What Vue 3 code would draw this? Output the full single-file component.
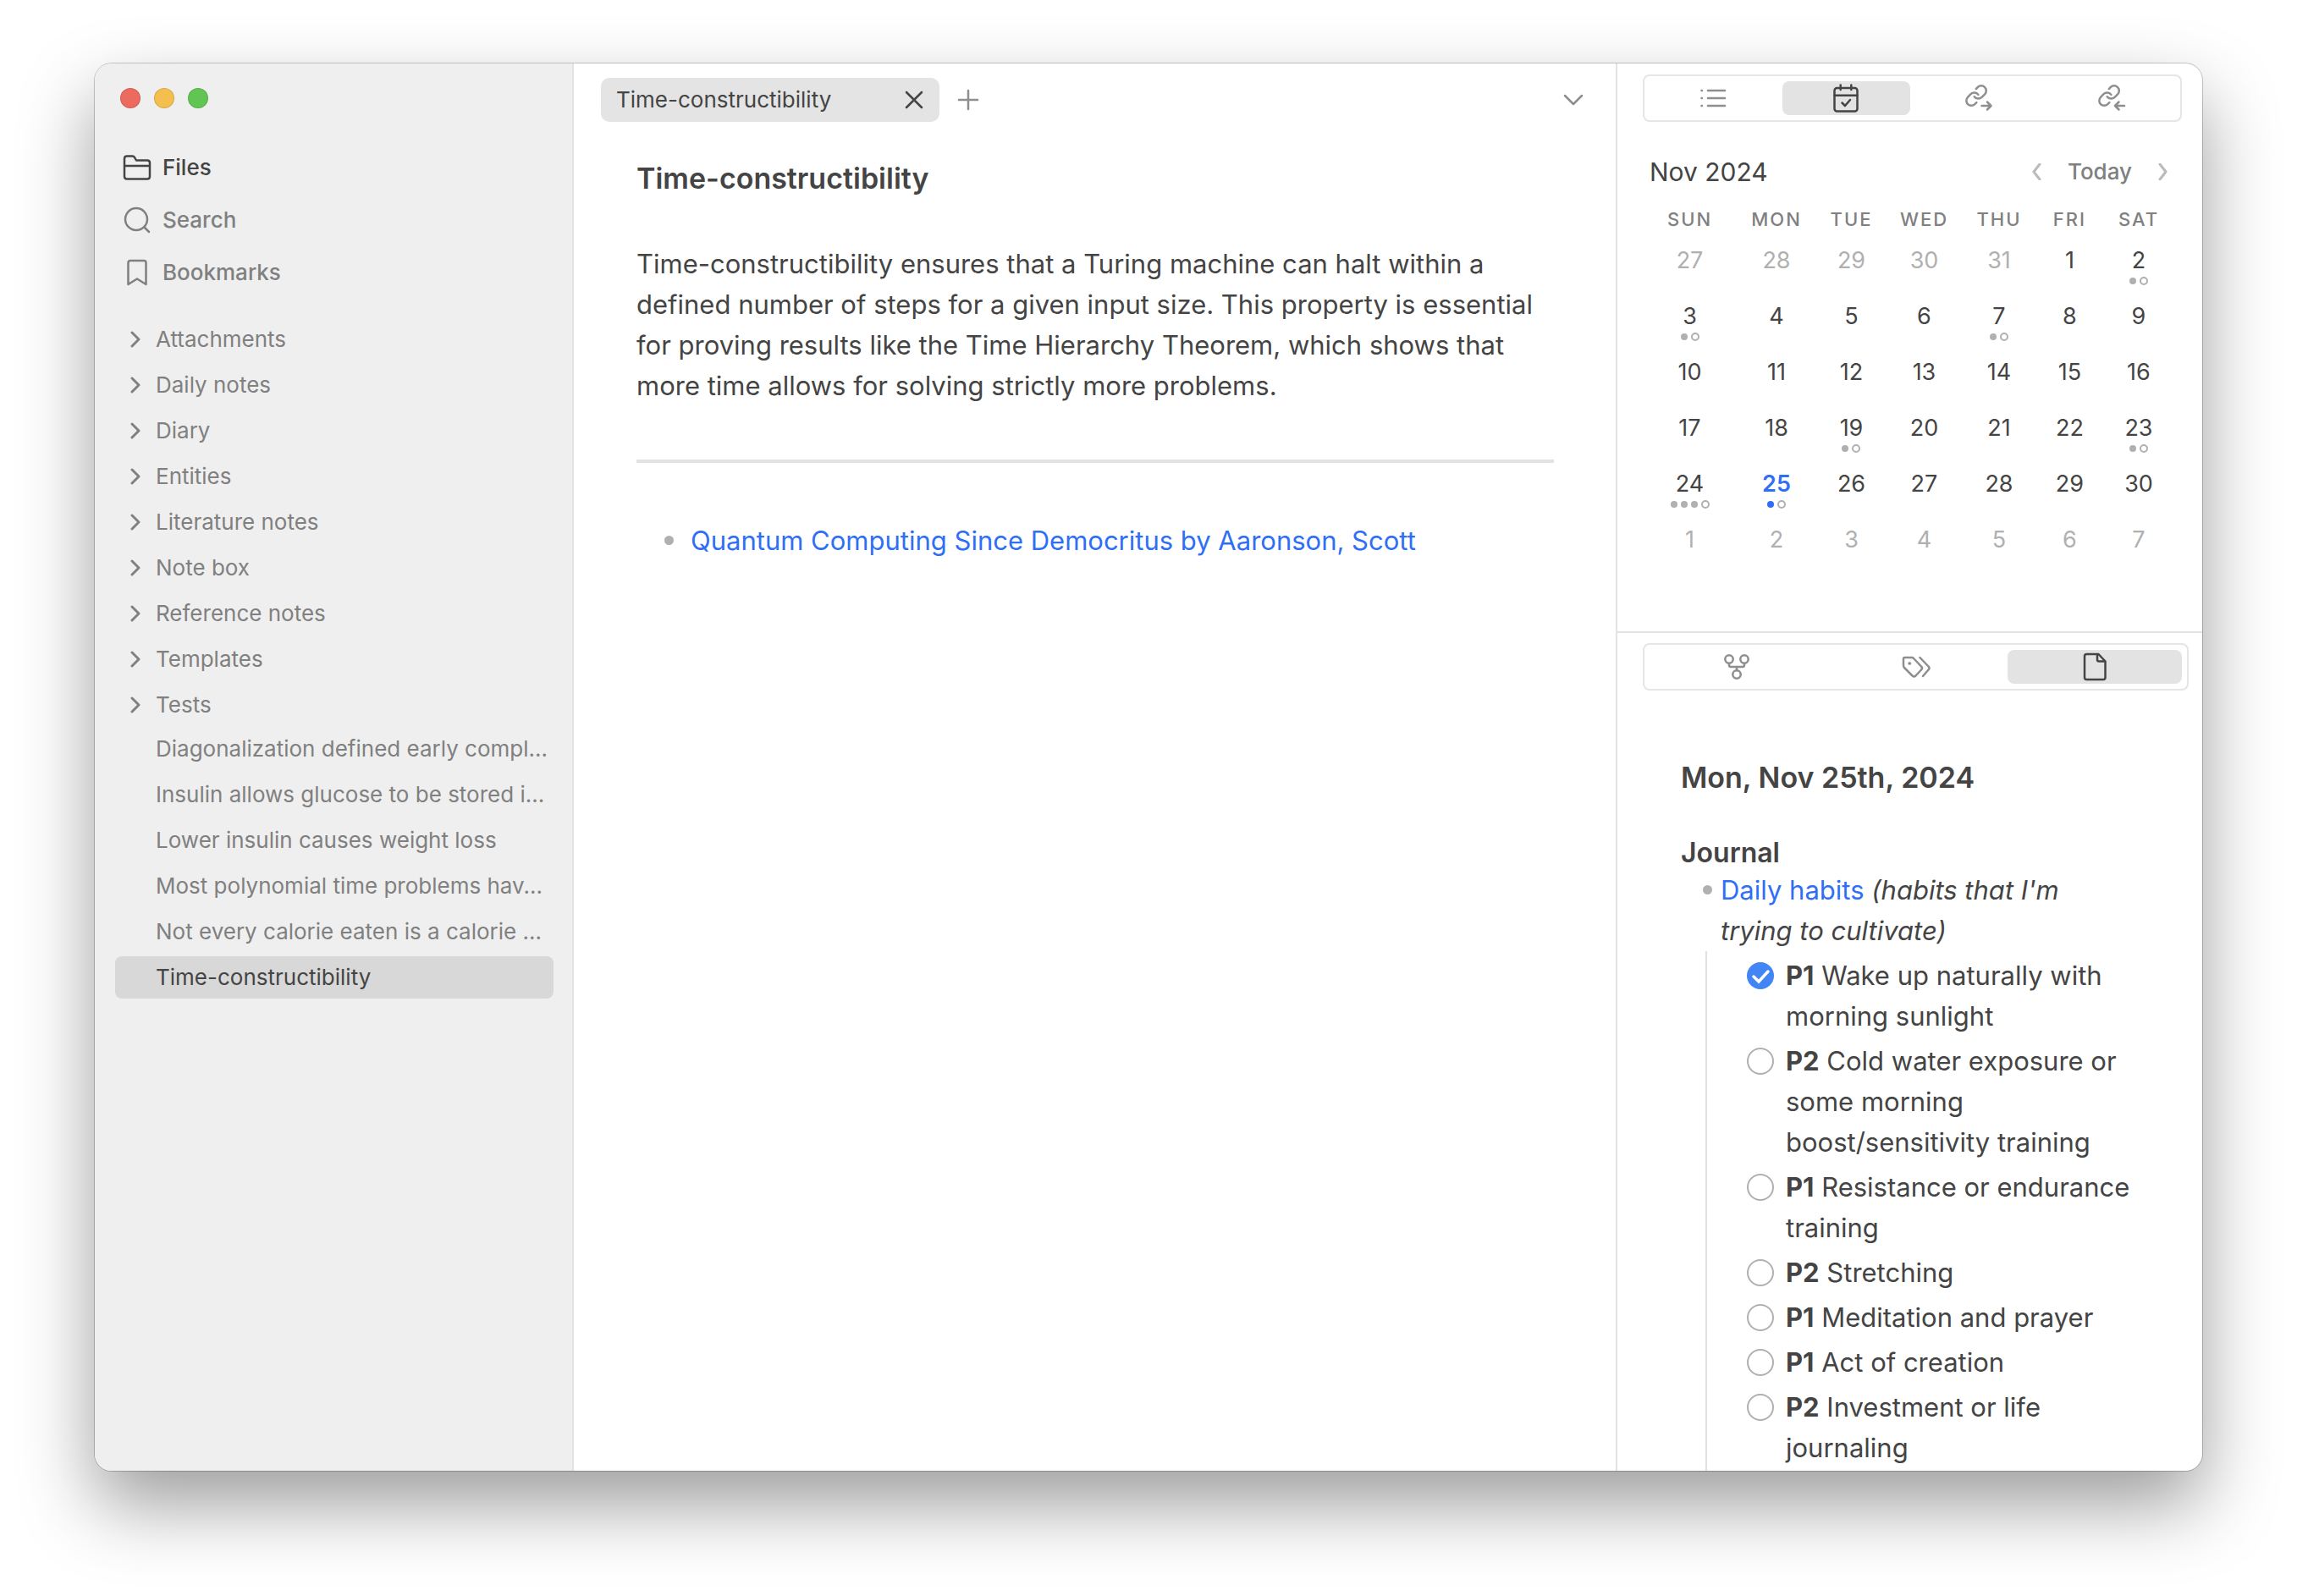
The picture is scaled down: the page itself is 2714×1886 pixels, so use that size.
<script setup>
import { ref } from 'vue'

const nav = [
  { label: 'Files', icon: 'folder', active: true },
  { label: 'Search', icon: 'search' },
  { label: 'Bookmarks', icon: 'bookmark' },
]
const folders = ['Attachments', 'Daily notes', 'Diary', 'Entities', 'Literature notes', 'Note box', 'Reference notes', 'Templates', 'Tests']
const files = [
  'Diagonalization defined early compl...',
  'Insulin allows glucose to be stored i...',
  'Lower insulin causes weight loss',
  'Most polynomial time problems hav...',
  'Not every calorie eaten is a calorie ...',
  'Time-constructibility',
]
const weekdays = ['SUN', 'MON', 'TUE', 'WED', 'THU', 'FRI', 'SAT']
const columns = [109, 96, 81, 91, 86, 81, 82]
const marks = { '0-6': 1, '1-0': 1, '1-4': 1, '3-2': 1, '3-6': 1, '4-0': 3, '4-1': 1 }
const weeks = Array.from({ length: 6 }, (_, w) =>
  Array.from({ length: 7 }, (_, d) => {
    const n = w * 7 + d - 4
    return {
      day: n < 1 ? n + 31 : n > 30 ? n - 30 : n,
      outside: n < 1 || n > 30,
      today: n === 25,
      dots: marks[`${w}-${d}`] || 0,
    }
  })
)
const tasks = ref([
  { priority: 'P1', text: 'Wake up naturally with morning sunlight', done: true },
  { priority: 'P2', text: 'Cold water exposure or some morning boost/sensitivity training', done: false },
  { priority: 'P1', text: 'Resistance or endurance training', done: false },
  { priority: 'P2', text: 'Stretching', done: false },
  { priority: 'P1', text: 'Meditation and prayer', done: false },
  { priority: 'P1', text: 'Act of creation', done: false },
  { priority: 'P2', text: 'Investment or life journaling', done: false },
])
</script>

<template>
  <div class="desktop">
    <div class="window">
      <aside class="sidebar">
        <div class="lights">
          <button class="light red" aria-label="Close"></button>
          <button class="light yellow" aria-label="Minimize"></button>
          <button class="light green" aria-label="Zoom"></button>
        </div>
        <nav class="nav">
          <button v-for="item in nav" :key="item.label" class="nav-item" :class="{ active: item.active }">
            <svg v-if="item.icon === 'folder'" class="icon" viewBox="0 0 36 36">
              <path d="M3 28.500V7.500Q3 4.500 6 4.500H12.500Q14 4.500 15 6L17 9.500H30Q33 9.500 33 12.500V28.500Q33 31.500 30 31.500H6Q3 31.500 3 28.500M3 16H33" />
            </svg>
            <svg v-else-if="item.icon === 'search'" class="icon" viewBox="0 0 36 36">
              <circle cx="17" cy="17" r="13" /><path d="M26.500 26.500L32 32" />
            </svg>
            <svg v-else class="icon" viewBox="0 0 36 36">
              <path d="M7.500 32V6.500Q7.500 4 10 4H26Q28.500 4 28.500 6.500V32L18 25.500Z" />
            </svg>
            <span>{{ item.label }}</span>
          </button>
        </nav>
        <ul class="tree">
          <li v-for="name in folders" :key="name">
            <button class="row">
              <svg class="caret" viewBox="0 0 20 20"><path d="M6 2L14 10L6 18" /></svg>
              <span>{{ name }}</span>
            </button>
          </li>
        </ul>
        <ul class="tree">
          <li v-for="name in files" :key="name">
            <button class="row file" :class="{ active: name === 'Time-constructibility' }">{{ name }}</button>
          </li>
        </ul>
      </aside>

      <main class="editor">
        <header class="tabs">
          <div class="tab">
            <span>Time-constructibility</span>
            <button class="icon-button" aria-label="Close tab">
              <svg viewBox="0 0 28 28"><path d="M5 5L23 23M23 5L5 23" /></svg>
            </button>
          </div>
          <button class="icon-button" aria-label="New tab">
            <svg viewBox="0 0 28 28"><path d="M14 3V25M3 14H25" /></svg>
          </button>
          <button class="icon-button menu" aria-label="Tab list">
            <svg viewBox="0 0 28 28"><path d="M4 9L14 19L24 9" /></svg>
          </button>
        </header>
        <article class="note">
          <h1>Time-constructibility</h1>
          <p>Time-constructibility ensures that a Turing machine can halt within a defined number of steps for a given input size. This property is essential for proving results like the Time Hierarchy Theorem, which shows that more time allows for solving strictly more problems.</p>
          <hr />
          <ul class="links">
            <li><a href="#">Quantum Computing Since Democritus by Aaronson, Scott</a></li>
          </ul>
        </article>
      </main>

      <aside class="side">
        <section class="calendar-pane">
          <div class="segments">
            <button class="segment" aria-label="Outline">
              <svg viewBox="0 0 36 36"><path d="M12 9H32M12 18H32M12 27H32" /><path d="M4.500 9H5M4.500 18H5M4.500 27H5" /></svg>
            </button>
            <button class="segment active" aria-label="Calendar">
              <svg viewBox="0 0 36 36"><rect x="4.500" y="6" width="27" height="27.500" rx="3" /><path d="M4.500 14.700H31.500M11.700 2.500V8M24.300 2.500V8M13.500 23.500L17 27L23 20" /></svg>
            </button>
            <button class="segment" aria-label="Outgoing links">
              <svg viewBox="0 0 36 36">
                <g transform="translate(.9 .9) scale(1.18)" stroke-width="2.100"><path d="M10 13a5 5 0 0 0 7.540.540l3-3a5 5 0 0 0-7.070-7.070l-1.720 1.710" transform="translate(0 0)" /><path d="M14 11a5 5 0 0 0-7.540-.540l-3 3a5 5 0 0 0 7.070 7.070l1.710-1.710" /></g>
                <path d="M21.500 27H32M28 22.500L32.500 27L28 31.500" />
              </svg>
            </button>
            <button class="segment" aria-label="Backlinks">
              <svg viewBox="0 0 36 36">
                <g transform="translate(.9 .9) scale(1.18)" stroke-width="2.100"><path d="M10 13a5 5 0 0 0 7.540.540l3-3a5 5 0 0 0-7.070-7.070l-1.720 1.710" /><path d="M14 11a5 5 0 0 0-7.540-.540l-3 3a5 5 0 0 0 7.070 7.070l1.710-1.710" /></g>
                <path d="M22.500 27H33M26.500 22.500L22 27L26.500 31.500" />
              </svg>
            </button>
          </div>
          <div class="month">
            <h2>Nov 2024</h2>
            <button class="step" aria-label="Previous month"><svg viewBox="0 0 20 20"><path d="M14 1L7 10L14 19" /></svg></button>
            <button class="today-button">Today</button>
            <button class="step" aria-label="Next month"><svg viewBox="0 0 20 20"><path d="M6 1L13 10L6 19" /></svg></button>
          </div>
          <div class="calendar-wrap">
            <table class="calendar">
              <colgroup><col v-for="(w, i) in columns" :key="i" :style="{ width: (w / 626) * 100 + '%' }" /></colgroup>
              <thead><tr><th v-for="d in weekdays" :key="d" scope="col">{{ d }}</th></tr></thead>
              <tbody>
                <tr v-for="(week, w) in weeks" :key="w">
                  <td v-for="(cell, d) in week" :key="d" :class="{ outside: cell.outside, today: cell.today }">
                    <div class="day">{{ cell.day }}</div>
                    <div class="dots">
                      <i v-for="n in cell.dots" :key="n" class="dot"></i><i v-if="cell.dots" class="dot hollow"></i>
                    </div>
                  </td>
                </tr>
              </tbody>
            </table>
          </div>
        </section>

        <section class="journal-pane">
          <div class="segments">
            <button class="segment" aria-label="Graph">
              <svg viewBox="0 0 36 36"><circle cx="9" cy="9" r="4.700" /><circle cx="27" cy="9" r="4.700" /><circle cx="18" cy="27" r="4.700" /><path d="M9 14V16Q9 18 11 18H25Q27 18 27 16V14M18 18V22" /></svg>
            </button>
            <button class="segment" aria-label="Tags">
              <svg viewBox="0 0 36 36"><path d="M3 8.500Q3 7 4.500 7H13Q14 7 15 8L24 17.500Q26 19.500 24 21.500L17.500 28.500Q15.500 30.500 13.500 28.500L4 19Q3 18 3 16.500ZM22.500 7L32.500 17.500Q34.500 19.500 32.500 21.500L26 29" /><path d="M10 14h.500" stroke-width="3.500" /></svg>
            </button>
            <button class="segment active" aria-label="Note">
              <svg viewBox="0 0 36 36"><path d="M21 3H8.500Q6 3 6 5.500V30.500Q6 33 8.500 33H28Q30.500 33 30.500 30.500V11.500L22.500 3H21V9.500Q21 11.500 23 11.500H30.500" /></svg>
            </button>
          </div>
          <article class="journal">
            <h1>Mon, Nov 25th, 2024</h1>
            <h2>Journal</h2>
            <ul class="habits">
              <li>
                <a href="#">Daily habits</a> <em>(habits that I'm trying to cultivate)</em>
              </li>
            </ul>
            <ul class="tasks">
              <li v-for="(task, i) in tasks" :key="i">
                <input :id="`task-${i}`" v-model="task.done" type="checkbox" />
                <label :for="`task-${i}`"><strong>{{ task.priority }}</strong> {{ task.text }}</label>
              </li>
            </ul>
          </article>
        </section>
      </aside>
    </div>
  </div>
</template>

<style>
body {
  margin: 0;
  background: #fff;
}
</style>

<style scoped>
* {
  box-sizing: border-box;
}
.desktop {
  height: 100vh;
  padding: 75px 112px 148px;
  font-family: Inter, "Liberation Sans", sans-serif;
  font-size: 31px;
  line-height: 48px;
  color: #444;
}
.window {
  display: grid;
  grid-template-columns: 566px minmax(0, 1fr) 693px;
  height: 100%;
  overflow: hidden;
  border-radius: 20px;
  background: #fff;
  box-shadow: 0 0 0 1px rgba(0, 0, 0, 0.2), 0 40px 88px rgba(0, 0, 0, 0.39);
}
button {
  margin: 0;
  padding: 0;
  border: 0;
  background: none;
  font: inherit;
  color: inherit;
}
ul {
  margin: 0;
  padding: 0;
  list-style: none;
}
a {
  color: #2f6ff6;
  text-decoration: none;
}
svg {
  display: block;
  fill: none;
  stroke: currentColor;
  stroke-width: 2.5;
  stroke-linecap: round;
  stroke-linejoin: round;
}

/* Left sidebar */
.sidebar {
  padding: 29px 22px 0 24px;
  border-right: 2px solid #e3e3e3;
  background: #efefef;
  color: #808080;
  font-size: 26px;
}
.lights {
  display: flex;
  gap: 16px;
  padding-left: 6px;
}
.light {
  width: 24px;
  height: 24px;
  border: 1px solid rgba(0, 0, 0, 0.12);
  border-radius: 50%;
}
.red { background: #ec6a5e; }
.yellow { background: #f4bf4f; }
.green { background: #61c554; }
.nav {
  display: flex;
  flex-direction: column;
  padding: 39px 0 23px 8px;
}
.nav-item {
  display: flex;
  align-items: center;
  gap: 12px;
  height: 62px;
  font-weight: 500;
}
.nav-item.active {
  color: #444;
}
.icon {
  width: 36px;
  height: 36px;
}
.tree {
  display: flex;
  flex-direction: column;
  gap: 4px;
}
.tree + .tree {
  margin-top: 2px;
}
.row {
  display: flex;
  align-items: center;
  gap: 14px;
  width: 100%;
  height: 50px;
  padding-left: 14px;
  border-radius: 8px;
  text-align: left;
  white-space: nowrap;
}
.row.file {
  padding-left: 48px;
}
.row.active {
  background: #d8d8d8;
  color: #444;
}
.caret {
  width: 20px;
  height: 20px;
  stroke-width: 3;
}

/* Editor */
.tabs {
  display: flex;
  align-items: center;
  gap: 20px;
  padding: 17px 36px 0 32px;
  color: #8e8e8e;
}
.tab {
  display: flex;
  align-items: center;
  justify-content: space-between;
  width: 400px;
  height: 52px;
  padding: 0 16px 0 18px;
  border-radius: 10px;
  background: #e4e4e4;
  color: #444;
  font-size: 26px;
}
.icon-button svg {
  width: 28px;
  height: 28px;
}
.menu {
  margin-left: auto;
}
.note {
  padding: 43px 73px 0 74px;
}
h1 {
  margin: 0;
  font-size: 34px;
  font-weight: 600;
  line-height: 48px;
}
.note p {
  margin: 53px 0 0;
}
hr {
  height: 4px;
  margin: 63px 0 68px;
  border: 0;
  background: #e3e3e3;
}
.links li {
  position: relative;
  padding-left: 64px;
}
.links li::before,
.habits li::before {
  content: "";
  position: absolute;
  top: 18px;
  left: 33px;
  width: 11px;
  height: 11px;
  border-radius: 50%;
  background: #b0b0b0;
}

/* Right sidebar */
.side {
  display: flex;
  flex-direction: column;
  min-height: 0;
  border-left: 2px solid #e3e3e3;
}
.calendar-pane {
  height: 673px;
  padding: 13px 24px 0 30px;
  border-bottom: 2px solid #e3e3e3;
}
.segments {
  display: flex;
  gap: 6px;
  height: 56px;
  padding: 6px;
  border: 2px solid #e5e5e5;
  border-radius: 8px;
  color: #8e8e8e;
}
.segment {
  display: flex;
  flex: 1;
  align-items: center;
  justify-content: center;
  border-radius: 8px;
}
.segment.active {
  background: #e3e3e3;
  color: #444;
}
.segment svg {
  width: 36px;
  height: 36px;
}
.month {
  display: flex;
  align-items: center;
  gap: 27px;
  padding: 35px 12px 0 8px;
}
.month h2 {
  flex: 1;
  margin: 0;
  font-size: 30px;
  font-weight: 400;
}
.today-button {
  color: #808080;
  font-size: 26px;
  font-weight: 500;
}
.step {
  color: #bbb;
}
.step svg {
  width: 20px;
  height: 20px;
  stroke-width: 3;
}
.calendar-wrap {
  padding: 0 10px 0 1px;
}
.calendar {
  width: 100%;
  border-collapse: collapse;
  table-layout: fixed;
  text-align: center;
}
.calendar th {
  height: 63px;
  padding: 0;
  color: #808080;
  font-size: 22px;
  font-weight: 500;
  letter-spacing: 2px;
}
.calendar td {
  height: 66px;
  padding: 0;
  font-size: 27px;
  line-height: 36px;
  vertical-align: top;
}
.calendar .outside {
  color: #b0b0b0;
}
.calendar .today {
  color: #2f6ff6;
  font-weight: 600;
}
.dots {
  display: flex;
  align-items: center;
  justify-content: center;
  gap: 4px;
  height: 12px;
}
.dot {
  width: 8px;
  height: 8px;
  border-radius: 50%;
  background: #b0b0b0;
}
.today .dot {
  background: #2f6ff6;
}
.dots .hollow {
  width: 10px;
  height: 10px;
  border: 2px solid #b0b0b0;
  background: none;
}
.journal-pane {
  flex: 1;
  min-height: 0;
  padding: 12px 16px 0 30px;
}
.journal {
  padding: 79px 64px 0 45px;
}
.journal h2 {
  margin: 41px 0 -4px;
  font-size: 32px;
  font-weight: 600;
}
.habits li {
  position: relative;
  padding-left: 47px;
}
.habits li::before {
  left: 26px;
}
.tasks {
  display: flex;
  flex-direction: column;
  gap: 5px;
  margin-left: 29px;
  padding: 5px 0 4px 47px;
  border-left: 2px solid #e0e0e0;
}
.tasks li {
  display: flex;
  align-items: flex-start;
  gap: 14px;
}
.tasks input {
  flex: none;
  appearance: none;
  width: 32px;
  height: 32px;
  margin: 8px 0 0;
  border: 2px solid #b0b0b0;
  border-radius: 50%;
}
.tasks input:checked {
  border: 0;
  background: #4285f4 url("data:image/svg+xml,%3Csvg xmlns='http://www.w3.org/2000/svg' viewBox='0 0 32 32'%3E%3Cpath d='M8 17L14 23L25 11' fill='none' stroke='white' stroke-width='3.500' stroke-linecap='round'/%3E%3C/svg%3E");
}
strong {
  font-weight: 700;
}
</style>
